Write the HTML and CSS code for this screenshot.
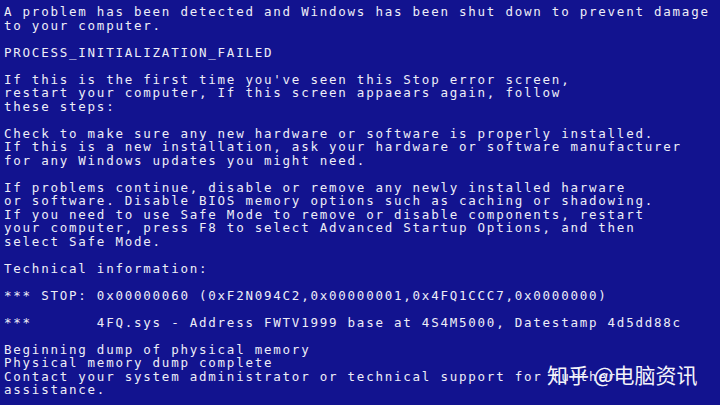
FILE: index.html
```html
<!DOCTYPE html>
<html lang="en">

<head>
  <meta charset="UTF-8" />
  <title>Stop error</title>
  <link rel="stylesheet" href="styles.css">
</head>

<body>
  <div class="screen">
    <p>A problem has been detected and Windows has been shut down to prevent damage<br>to your computer.</p>
    <p>PROCESS_INITIALIZATION_FAILED</p>
    <p>If this is the first time you've seen this Stop error screen,<br>restart your computer, If this screen appaears again, follow<br>these steps:</p>
    <p>Check to make sure any new hardware or software is properly installed.<br>If this is a new installation, ask your hardware or software manufacturer<br>for any Windows updates you might need.</p>
    <p>If problems continue, disable or remove any newly installed harware<br>or software. Disable BIOS memory options such as caching or shadowing.<br>If you need to use Safe Mode to remove or disable components, restart<br>your computer, press F8 to select Advanced Startup Options, and then<br>select Safe Mode.</p>
    <p>Technical information:</p>
    <p>*** STOP: 0x00000060 (0xF2N094C2,0x00000001,0x4FQ1CCC7,0x0000000)</p>
    <p class="pre">***       4FQ.sys - Address FWTV1999 base at 4S4M5000, Datestamp 4d5dd88c</p>
    <p>Beginning dump of physical memory<br>Physical memory dump complete<br>Contact your system administrator or technical support for further<br>assistance.</p>
  </div>

  <!-- 水印 -->
  <div class="mark">知乎 @电脑资讯</div>
</body>

</html>
```

FILE: styles.css
```css
body {
  margin: 0;
  padding: 0;
  background-color: #12138f;
  overflow: hidden;
}

.screen {
  width: 720px;
  height: 405px;
  padding: 5px 0 0 4px;
  box-sizing: border-box;
  color: #eeeef8;
  font-family: "DejaVu Sans Mono", "Liberation Mono", monospace;
  font-size: 12.5px;
  letter-spacing: 1.76px;
  line-height: 13.5px;
  white-space: nowrap;
}

.screen p {
  margin: 0 0 13.5px;
}

.screen .pre {
  white-space: pre;
}

.mark {
  position: absolute;
  left: 547px;
  top: 361px;
  color: #f4f4fa;
  font-family: "Noto Sans CJK SC", "Noto Sans", sans-serif;
  font-size: 21px;
  line-height: 26px;
  white-space: nowrap;
}
```
